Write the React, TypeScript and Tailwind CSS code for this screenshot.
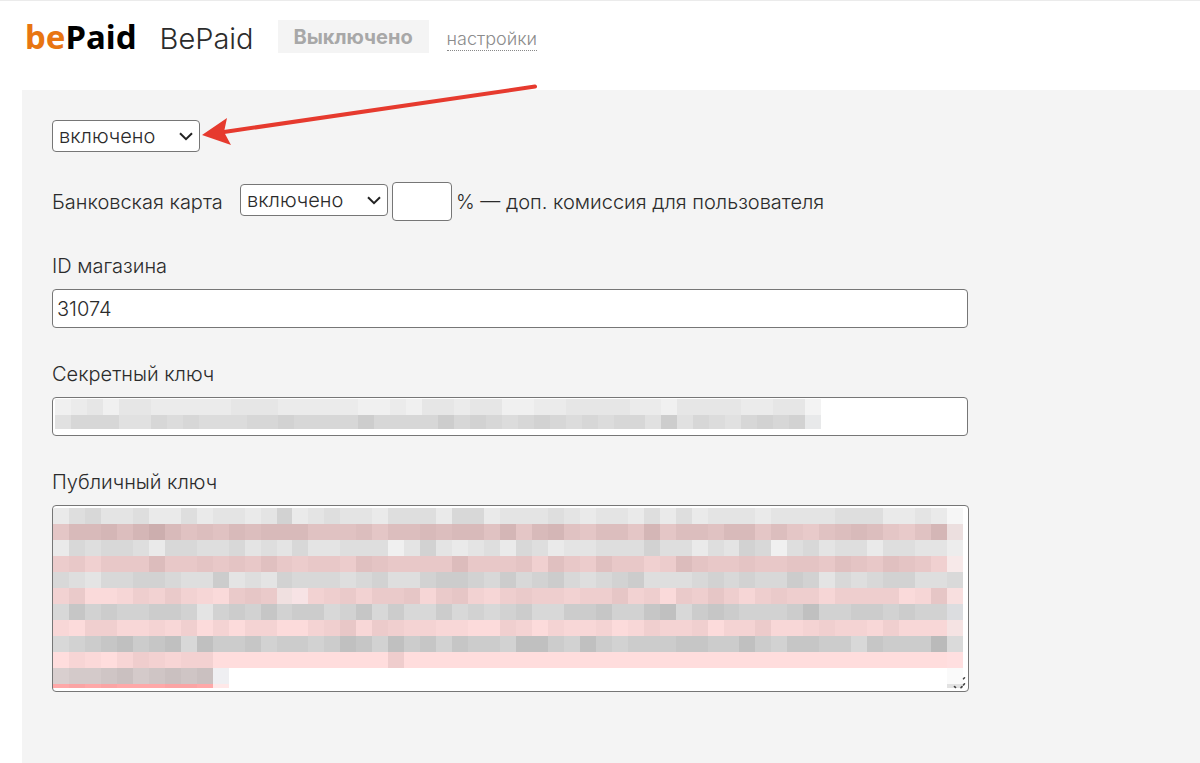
import { useState } from 'react';

type MosaicRow = {
  color: [number, number, number];
  step: number;
  cells: string;
  last?: string;
  height?: number;
};

const CELL = 16;

// each digit darkens the row colour by that many steps
const secretRows: MosaicRow[] = [
  { color: [240, 240, 240], step: 5, cells: '01202211111222111110010221220011222211022221122121102', last: '#f3f3f3' },
  { color: [230, 230, 230], step: 5, cells: '13331132322233433335333353432343232331513213434343344', last: '#e8e9ea' },
];

const publicRows: MosaicRow[] = [
  { color: [240, 240, 240], step: 6, cells: '13422311312212512322133314412223212213131222122223331121', last: '#f6f6f6' },
  { color: [236, 206, 206], step: 4, cells: '25564685343545553334244545536256324426244355242134542136', last: '#ecdfdf' },
  { color: [240, 240, 240], step: 6, cells: '14344314433423242233302521231431223335331325403423313322', last: '#ededed' },
  { color: [240, 208, 208], step: 4, cells: '12022252232324212214322225222304214220153223223324324320', last: '#f7e9e9' },
  { color: [234, 234, 234], step: 6, cells: '32133443225121433323422455435345323452223434335413234422', last: '#d9d9d9' },
  { color: [250, 218, 218], step: 4, cells: '24001324210454002342445145213433233523043531343313333015', last: '#f8dfdf' },
  { color: [228, 228, 228], step: 6, cells: '25343344303435344235242242323422445335624543334633443433', last: '#dcdde0' },
  { color: [252, 219, 219], step: 4, cells: '10331121302022002351432211003202112013223022411232213111', last: '#f5e3e3' },
  { color: [222, 222, 222], step: 6, cells: '12345345153342332354253424332553253233344335324433143336', last: '#dadada' },
  { color: [255, 221, 221], step: 4, cells: '02102432330000000000040000000000000000000000000000000000', last: '#ffdfe0' },
  { color: [222, 212, 212], step: 5, cells: '1223423434' },
  { color: [255, 168, 168], step: 4, cells: '0101000110', height: 4 },
];

function Mosaic({ rows, columns, width }: { rows: MosaicRow[]; columns: number; width: number }) {
  const height = rows.reduce((sum, row) => sum + (row.height ?? CELL), 0);

  return (
    <svg
      aria-hidden="true"
      width={width}
      height={height}
      viewBox={`0 0 ${columns * CELL} ${height}`}
      preserveAspectRatio="none"
      shapeRendering="crispEdges"
      className="block max-w-none"
    >
      {rows.map((row, y) => {
        const top = y * CELL;
        const digits = row.cells.slice(0, columns - (row.last ? 1 : 0));
        return (
          <g key={y}>
            {digits.split('').map((digit, x) => {
              const shade = Number(digit) * row.step;
              const [r, g, b] = row.color;
              return (
                <rect
                  key={x}
                  x={x * CELL}
                  y={top}
                  width={CELL}
                  height={row.height ?? CELL}
                  fill={`rgb(${r - shade},${g - shade},${b - shade})`}
                />
              );
            })}
            {row.last && (
              <rect x={(columns - 1) * CELL} y={top} width={CELL} height={CELL} fill={row.last} />
            )}
          </g>
        );
      })}
      {/* paler cells in the middle and round the short last line */}
      {rows.length > 10 && (
        <g>
          <rect x="224" y="80" width="16" height="16" fill="#f0e0e0" />
          <rect x="240" y="80" width="16" height="16" fill="#f7e3e5" />
          <rect x="160" y="160" width="16" height="16" fill="#efeff2" />
          <rect x="160" y="176" width="16" height="4" fill="#ffe8e8" />
          <rect x="896" y="160" width="16" height="16" fill="#fafafa" />
          <rect x="896" y="176" width="16" height="4" fill="#e2e2e2" />
        </g>
      )}
    </svg>
  );
}

function StatusSelect({ id, label }: { id: string; label: string }) {
  const [value, setValue] = useState('on');

  return (
    <div className="relative">
      <select
        id={id}
        aria-label={label}
        value={value}
        onChange={e => setValue(e.target.value)}
        className="block h-8 w-[148px] appearance-none rounded border border-[#767676] bg-white pl-1.5 text-xl leading-6"
      >
        <option value="on">включено</option>
        <option value="off">выключено</option>
      </select>
      <svg
        aria-hidden="true"
        width="14"
        height="9"
        viewBox="0 0 14 9"
        className="pointer-events-none absolute right-[7px] top-3"
      >
        <path d="M1 1.2 7 7.2 13 1.2" fill="none" stroke="#222" strokeWidth="2" />
      </svg>
    </div>
  );
}

export default function App() {
  const [fee, setFee] = useState('');
  const [shopId, setShopId] = useState('31074');

  return (
    <div className="flex min-h-screen flex-col border-t border-[#ebebeb] bg-white font-['Inter',sans-serif] font-light text-[#2b2b2b]">
      <header className="flex h-[89px] items-start pl-[25px] pt-[19px]">
        <div className="font-['Noto_Sans',sans-serif] text-[33px] font-bold leading-[34px] text-black">
          <span className="text-[#e87511]">be</span>Paid
        </div>
        <h1 className="ml-[23px] text-[29px] leading-[38px]">BePaid</h1>
        <button className="ml-6 h-[33px] w-[151px] bg-[#f4f4f4] text-xl font-bold text-[#a8a8a8]">
          Выключено
        </button>
        <a href="#settings" className="ml-[18px] mt-2 border-b border-dotted border-[#888] text-lg leading-[22px] text-[#8c8c8c]">
          настройки
        </a>
      </header>

      <main className="ml-[22px] flex-1 bg-[#f4f4f4] px-[30px] pb-16 pt-[30px] text-xl leading-6">
        <div className="relative w-[148px]">
          <StatusSelect id="status" label="Статус BePaid" />
          {/* Pointer to the status select */}
          <svg
            aria-hidden="true"
            width="344"
            height="70"
            viewBox="0 0 344 70"
            className="pointer-events-none absolute -top-10 left-[148px] max-w-none"
          >
            <path d="M24 52 335 6.5" stroke="#e63a2e" strokeWidth="4" strokeLinecap="round" />
            <path d="M2 55 27 38 24 52 31 65Z" fill="#e63a2e" />
          </svg>
        </div>

        <div className="mt-[30px] flex items-center">
          <label htmlFor="card" className="w-44 whitespace-nowrap">Банковская карта</label>
          <div className="mb-1 ml-3">
            <StatusSelect id="card" label="Банковская карта" />
          </div>
          <input
            id="fee"
            value={fee}
            onChange={e => setFee(e.target.value)}
            className="ml-1 h-[39px] w-[60px] rounded border border-[#767676] bg-white px-1"
          />
          <label htmlFor="fee" className="ml-1">% — доп. комиссия для пользователя</label>
        </div>

        <div className="mt-[33px] max-w-[916px]">
          <label htmlFor="shop" className="block">ID магазина</label>
          <input
            id="shop"
            value={shopId}
            onChange={e => setShopId(e.target.value)}
            className="mt-[11px] block h-[39px] w-full rounded border border-[#767676] bg-white px-1"
          />
        </div>

        <div className="mt-[34px] max-w-[916px]">
          <label htmlFor="secret" className="block">Секретный ключ</label>
          <div className="relative mt-[11px]">
            <input id="secret" className="block h-[39px] w-full rounded border border-[#767676] bg-white px-1" />
            <div className="pointer-events-none absolute inset-x-[3px] top-0.5 h-[30px] overflow-hidden">
              <Mosaic rows={secretRows} columns={48} width={766} />
            </div>
          </div>
        </div>

        <div className="mt-[34px] max-w-[917px]">
          <label htmlFor="public" className="block">Публичный ключ</label>
          <div className="relative mt-[11px]">
            <textarea
              id="public"
              className="block h-[187px] w-full resize-none rounded border border-[#767676] bg-white px-1"
            />
            <div className="pointer-events-none absolute inset-x-px top-[3px] overflow-hidden">
              <Mosaic rows={publicRows} columns={57} width={910} />
            </div>
            {/* Resize grip */}
            <svg
              aria-hidden="true"
              width="14"
              height="14"
              viewBox="0 0 14 14"
              className="pointer-events-none absolute bottom-0.5 right-0.5"
            >
              <g stroke="#444" strokeWidth="1.6" strokeLinecap="round">
                <path d="M10.5 2.8 11.5 1.8" />
                <path d="M10.5 9 11.5 7.8" />
                <path d="M8 11.6 9 10.6" />
                <path d="M1.5 10.6 2.5 11.4" />
              </g>
            </svg>
          </div>
        </div>
      </main>
    </div>
  );
}
